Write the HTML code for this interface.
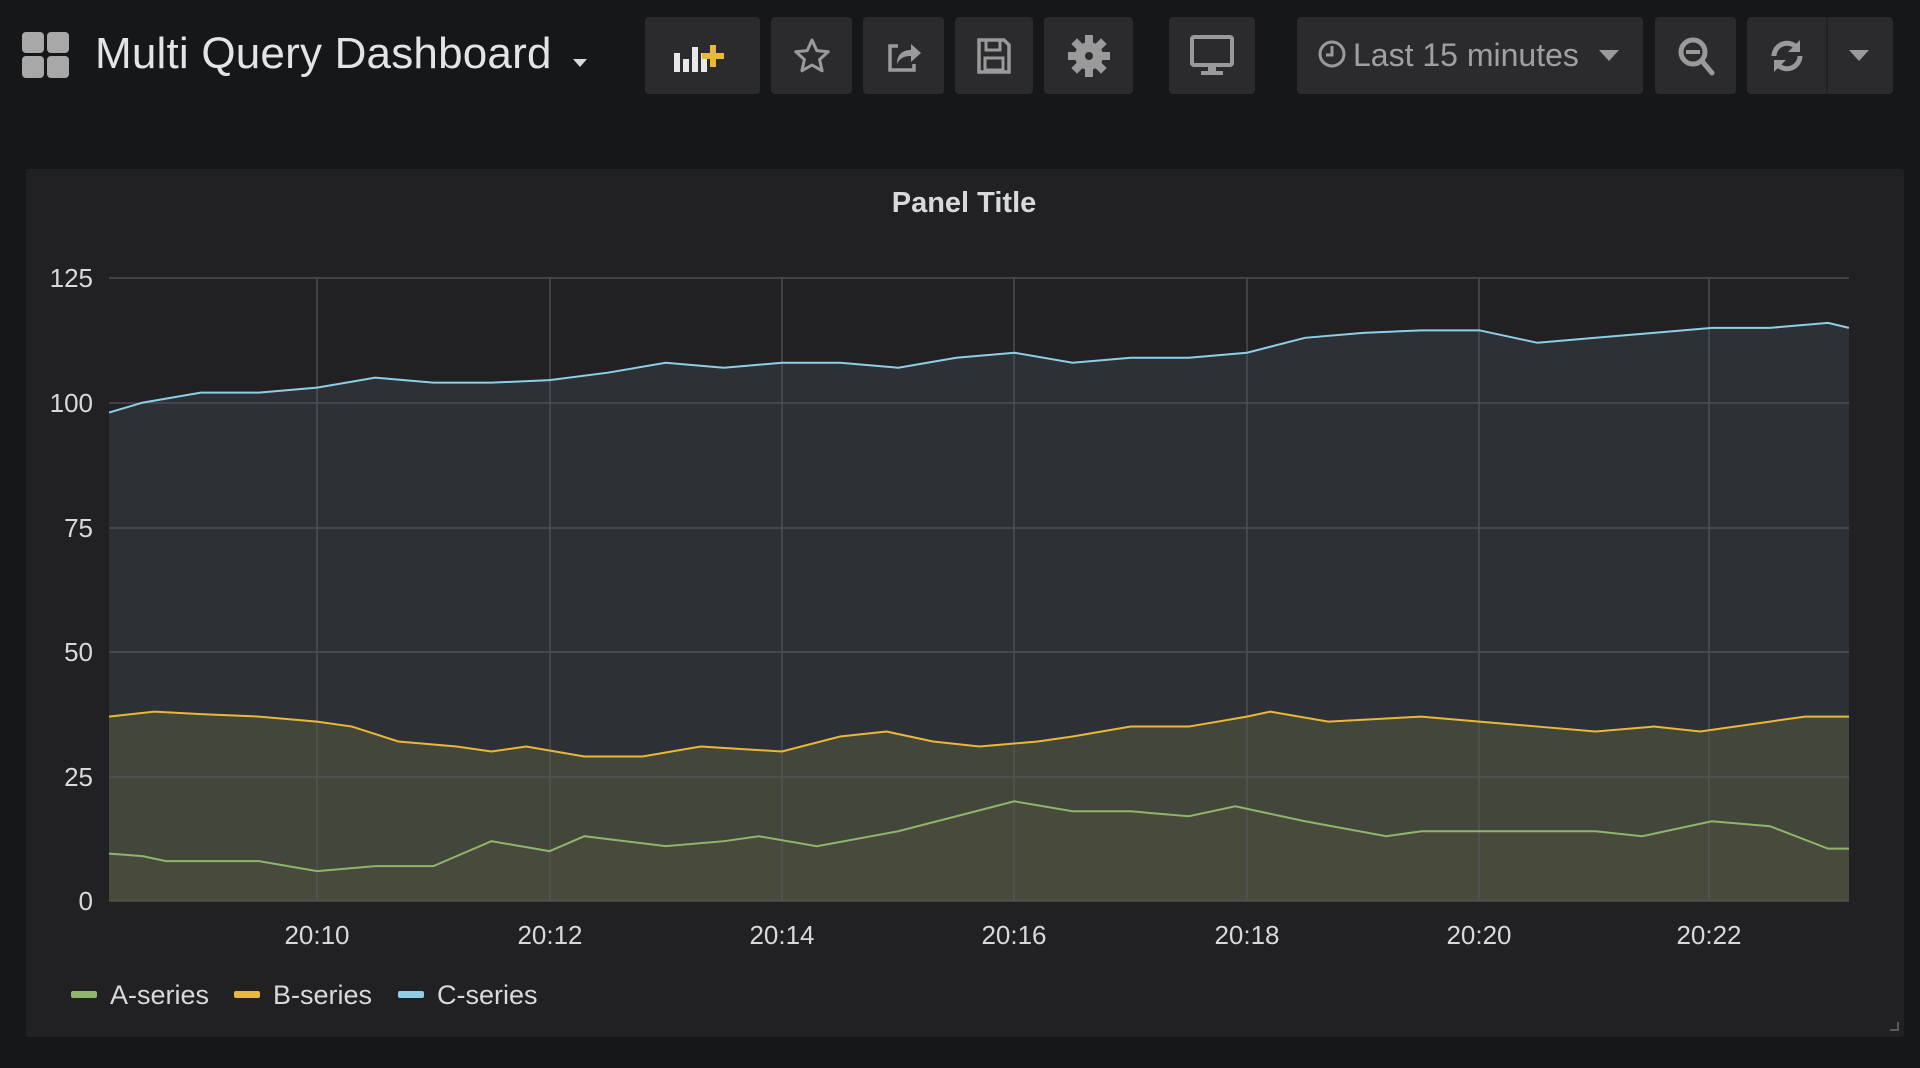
<!DOCTYPE html>
<html><head><meta charset="utf-8"><style>
html,body{margin:0;padding:0;background:#161719;width:1920px;height:1068px;overflow:hidden;font-family:"Liberation Sans",sans-serif;}
.btn{position:absolute;top:17px;height:77px;background:#2b2b2e;border-radius:4px;}
.btn svg{position:absolute;left:50%;top:50%;transform:translate(-50%,-50%);}
.t{position:absolute;color:#d8d9da;}
</style></head><body>
<svg style="position:absolute;left:22px;top:32px" width="48" height="46" viewBox="0 0 48 46">
<rect x="0" y="0" width="22" height="21" rx="4" fill="#a8a8a8"/><rect x="25" y="0" width="22" height="21" rx="4" fill="#a8a8a8"/>
<rect x="0" y="24" width="22" height="22" rx="4" fill="#a8a8a8"/><rect x="25" y="24" width="22" height="22" rx="4" fill="#a8a8a8"/></svg>
<div class="t" style="left:95px;top:29px;font-size:44px;color:#e3e4e5;letter-spacing:0.2px">Multi Query Dashboard</div>
<svg style="position:absolute;left:573px;top:59px" width="14" height="9"><path d="M0 0H14L7 8Z" fill="#d8d9da"/></svg>

<div class="btn" style="left:645px;width:115px"><svg width="62" height="34" viewBox="0 0 62 34"><rect x="2" y="14" width="6" height="19" fill="#e8e8e8"/><rect x="11" y="20" width="6" height="13" fill="#e8e8e8"/><rect x="20" y="8" width="6" height="25" fill="#e8e8e8"/><rect x="29" y="14" width="6" height="19" fill="#e8e8e8"/><path d="M38 6h6v8h8v6h-8v8h-6v-8h-8v-6h8z" fill="#eab839"/></svg></div>
<div class="btn" style="left:771px;width:81px"><svg width="40" height="40" viewBox="0 0 40 40"><path d="M20 4l4.8 10.6 11.4 1.2-8.6 7.7 2.5 11.3L20 29l-10.1 5.8 2.5-11.3-8.6-7.7 11.4-1.2z" fill="none" stroke="#9a9a9a" stroke-width="3" stroke-linejoin="round"/></svg></div>
<div class="btn" style="left:863px;width:81px"><svg width="40" height="40" viewBox="0 0 40 40"><path d="M14 10H6v24h24v-6" fill="none" stroke="#9a9a9a" stroke-width="3.5"/><path d="M13 28c0-10 6-14 14-14V8l10 9-10 9v-6c-7 0-11 2-14 8z" fill="#9a9a9a"/></svg></div>
<div class="btn" style="left:955px;width:78px"><svg width="36" height="38" viewBox="0 0 36 38"><path d="M3 3h25l5 5v27H3z" fill="none" stroke="#9a9a9a" stroke-width="3.5"/><rect x="10" y="3" width="14" height="10" fill="none" stroke="#9a9a9a" stroke-width="3"/><rect x="9" y="21" width="18" height="12" fill="none" stroke="#9a9a9a" stroke-width="3"/></svg></div>
<div class="btn" style="left:1044px;width:89px"><svg width="46" height="46" viewBox="0 0 46 46"><g fill="#9a9a9a"><circle cx="23" cy="23" r="14"/><g id="g"><rect x="19" y="2" width="8" height="10"/><rect x="19" y="34" width="8" height="10"/><rect x="2" y="19" width="10" height="8"/><rect x="34" y="19" width="10" height="8"/></g><use href="#g" transform="rotate(45 23 23)"/></g><circle cx="23" cy="23" r="4" fill="#2b2b2e"/></svg></div>
<div class="btn" style="left:1169px;width:86px"><svg width="44" height="42" viewBox="0 0 44 42"><rect x="2" y="2" width="40" height="28" rx="2" fill="none" stroke="#9a9a9a" stroke-width="4"/><rect x="18" y="30" width="8" height="7" fill="#9a9a9a"/><rect x="11" y="36" width="22" height="4" fill="#9a9a9a"/></svg></div>
<div class="btn" style="left:1297px;width:346px"><div class="t" style="left:20px;top:20px;font-size:32px;color:#a0a0a0;white-space:nowrap"><svg width="30" height="30" viewBox="0 0 30 30" style="vertical-align:-3px;margin-right:6px;position:static;transform:none"><circle cx="15" cy="15" r="12" fill="none" stroke="#9a9a9a" stroke-width="3"/><path d="M15 7v9h-6" fill="none" stroke="#9a9a9a" stroke-width="3"/></svg>Last 15 minutes</div><svg style="left:auto;right:24px;transform:translateY(-50%)" width="20" height="12"><path d="M0 0H20L10 11Z" fill="#9a9a9a"/></svg></div>
<div class="btn" style="left:1655px;width:81px"><svg width="40" height="42" viewBox="0 0 40 42"><circle cx="17" cy="17" r="12" fill="none" stroke="#9a9a9a" stroke-width="5"/><rect x="10" y="15" width="14" height="4" fill="#9a9a9a"/><path d="M26 26l10 12" stroke="#9a9a9a" stroke-width="5" stroke-linecap="round"/></svg></div>
<div class="btn" style="left:1747px;width:146px"><svg style="left:40px" width="40" height="40" viewBox="0 0 40 40"><path d="M7 20a13 13 0 0 1 23-8" fill="none" stroke="#9a9a9a" stroke-width="5"/><path d="M33 4v12H21z" fill="#9a9a9a"/><path d="M33 20a13 13 0 0 1-23 8" fill="none" stroke="#9a9a9a" stroke-width="5"/><path d="M7 36V24h12z" fill="#9a9a9a"/></svg><div style="position:absolute;left:79px;top:0;width:2px;height:77px;background:#222225"></div><svg style="left:112px" width="20" height="12"><path d="M0 0H20L10 11Z" fill="#9a9a9a"/></svg></div>

<div style="position:absolute;left:26px;top:169px;width:1878px;height:868px;background:#212124;border-radius:3px"></div>
<div class="t" style="left:0;width:1928px;text-align:center;top:187px;font-size:29px;font-weight:bold;color:#d8d9da">Panel Title</div>

<svg style="position:absolute;left:0;top:0" width="1920" height="1068">
<g font-family="Liberation Sans,sans-serif" font-size="26" fill="#d8d9da" text-anchor="end">
<text x="93" y="287">125</text><text x="93" y="412">100</text><text x="93" y="537">75</text><text x="93" y="661">50</text><text x="93" y="786">25</text><text x="93" y="910">0</text></g>
<g font-family="Liberation Sans,sans-serif" font-size="26" fill="#d8d9da" text-anchor="middle">
<text x="317" y="944">20:10</text><text x="550" y="944">20:12</text><text x="782" y="944">20:14</text><text x="1014" y="944">20:16</text><text x="1247" y="944">20:18</text><text x="1479" y="944">20:20</text><text x="1709" y="944">20:22</text></g>
<svg x="109" y="278" width="1740" height="623" viewBox="8.21 0 14.97 125" preserveAspectRatio="none" overflow="visible">
<g transform="translate(0,125) scale(1,-1)">
<polygon fill="#2d3136" points="8.21,0 8.21,98 8.5,100 9,102 9.5,102 10,103 10.5,105 11,104 11.5,104 12,104.5 12.5,106 13,108 13.5,107 14,108 14.5,108 15,107 15.5,109 16,110 16.5,108 17,109 17.5,109 18,110 18.5,113 19,114 19.5,114.5 20,114.5 20.5,112 21,113 21.5,114 22,115 22.5,115 23,116 23.18,115 23.18,0"/>
<polygon fill="#43463a" points="8.21,0 8.21,37 8.6,38 9,37.5 9.5,37 10,36 10.3,35 10.7,32 11.2,31 11.5,30 11.8,31 12.3,29 12.8,29 13.3,31 14,30 14.5,33 14.9,34 15.3,32 15.7,31 16.2,32 16.5,33 17,35 17.5,35 18,37 18.2,38 18.7,36 19.5,37 20,36 20.5,35 21,34 21.5,35 21.9,34 22.5,36 22.8,37 23.18,37 23.18,0"/>
<polygon fill="#484b3c" points="8.21,0 8.21,9.5 8.5,9 8.7,8 9.5,8 10,6 10.5,7 11,7 11.5,12 12,10 12.3,13 13,11 13.5,12 13.8,13 14.3,11 15,14 15.5,17 16,20 16.5,18 17,18 17.5,17 17.9,19 18.5,16 19.2,13 19.5,14 20.5,14 21,14 21.4,13 22,16 22.5,15 23,10.5 23.18,10.5 23.18,0"/>
</g></svg>
<g stroke="#55575a" stroke-width="1.5" opacity="0.8"><path d="M109 278H1849M109 403H1849M109 528H1849M109 652H1849M109 777H1849M109 901H1849"/><path d="M317 278V901M550 278V901M782 278V901M1014 278V901M1247 278V901M1479 278V901M1709 278V901"/></g>
<svg x="109" y="278" width="1740" height="623" viewBox="8.21 0 14.97 125" preserveAspectRatio="none" overflow="visible">
<g transform="translate(0,125) scale(1,-1)" fill="none">
<polyline vector-effect="non-scaling-stroke" stroke-width="2" stroke="#8ecfe6" points="8.21,98 8.5,100 9,102 9.5,102 10,103 10.5,105 11,104 11.5,104 12,104.5 12.5,106 13,108 13.5,107 14,108 14.5,108 15,107 15.5,109 16,110 16.5,108 17,109 17.5,109 18,110 18.5,113 19,114 19.5,114.5 20,114.5 20.5,112 21,113 21.5,114 22,115 22.5,115 23,116 23.18,115"/>
<polyline vector-effect="non-scaling-stroke" stroke-width="2" stroke="#eab839" points="8.21,37 8.6,38 9,37.5 9.5,37 10,36 10.3,35 10.7,32 11.2,31 11.5,30 11.8,31 12.3,29 12.8,29 13.3,31 14,30 14.5,33 14.9,34 15.3,32 15.7,31 16.2,32 16.5,33 17,35 17.5,35 18,37 18.2,38 18.7,36 19.5,37 20,36 20.5,35 21,34 21.5,35 21.9,34 22.5,36 22.8,37 23.18,37"/>
<polyline vector-effect="non-scaling-stroke" stroke-width="2" stroke="#8fb56c" points="8.21,9.5 8.5,9 8.7,8 9.5,8 10,6 10.5,7 11,7 11.5,12 12,10 12.3,13 13,11 13.5,12 13.8,13 14.3,11 15,14 15.5,17 16,20 16.5,18 17,18 17.5,17 17.9,19 18.5,16 19.2,13 19.5,14 20.5,14 21,14 21.4,13 22,16 22.5,15 23,10.5 23.18,10.5"/>
</g></svg>
<rect x="71" y="991" width="26" height="7" rx="2" fill="#8fb56c"/><rect x="234" y="991" width="26" height="7" rx="2" fill="#eab839"/><rect x="398" y="991" width="26" height="7" rx="2" fill="#8ecfe6"/>
<g font-family="Liberation Sans,sans-serif" font-size="27" fill="#d8d9da"><text x="110" y="1004">A-series</text><text x="273" y="1004">B-series</text><text x="437" y="1004">C-series</text></g>
<path d="M1898 1022v8h-8" stroke="#5a5a5e" stroke-width="2" fill="none"/>
</svg>
</body></html>
